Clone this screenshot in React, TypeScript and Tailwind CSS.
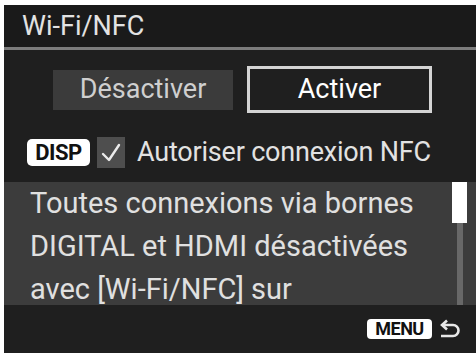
const font = { fontFamily: 'Roboto, "DejaVu Sans", sans-serif' } as const;

function CheckIcon() {
  return (
    <svg width="22" height="22" viewBox="0 0 22 22" fill="none">
      <polyline points="3,12 9,18 19,3" stroke="#ececec" strokeWidth="2.4" strokeLinecap="round" strokeLinejoin="round" />
    </svg>
  );
}

function ReturnIcon() {
  return (
    <svg width="24" height="20" viewBox="0 0 24 20" fill="none">
      <path d="M4 6 H15 A5.5 5.5 0 0 1 15 17 H3" stroke="#e8e8e8" strokeWidth="2.6" />
      <polyline points="9,1.5 4,6 9,10.5" stroke="#e8e8e8" strokeWidth="2.6" />
    </svg>
  );
}

export default function App() {
  return (
    <div className="w-[476px] h-[357px] bg-white pl-[4px] pt-[5px] pb-[4px]" style={font}>
      <div className="h-full bg-[#1f1f1f] flex flex-col text-[#e2e2e2]">
        <div className="h-[45px] shrink-0 bg-[#1a1a1a] border-b-[3px] border-[#7c7c7c] px-[18px] flex items-center text-[27px] leading-none">
          Wi-Fi/NFC
        </div>

        <div className="flex items-center pt-[16px] pl-[49px] gap-[14px]">
          <div className="w-[180px] h-[40px] bg-[#3b3b3b] flex items-center justify-center text-[27px] leading-none text-[#cfcfcf]">
            Désactiver
          </div>
          <div className="w-[185px] h-[47px] border-[3px] border-[#d4d4d4] flex items-center justify-center text-[27px] leading-none text-white">
            Activer
          </div>
        </div>

        <div className="flex items-center mt-[24px] h-[31px] pl-[23px]">
          <div className="w-[63px] h-[27px] bg-white rounded-[5px] flex items-center justify-center text-[#111] text-[22px] font-bold leading-none tracking-[-0.5px]">
            DISP
          </div>
          <div className="ml-[7px] w-[28px] h-[31px] bg-[#4e4e4e] flex items-center justify-center">
            <CheckIcon />
          </div>
          <span className="ml-[12px] text-[27px] leading-none tracking-[-0.2px]">Autoriser connexion NFC</span>
        </div>

        <div className="mt-[14px] h-[123px] shrink-0 bg-[#3c3c3c] flex pr-[9px]">
          <div className="flex-1 pl-[26px] text-[29px] leading-[43px] text-[#e0e0e0]">
            <div>Toutes connexions via bornes</div>
            <div>DIGITAL et HDMI désactivées</div>
            <div>avec [Wi-Fi/NFC] sur</div>
          </div>
          <div className="w-[15px] flex flex-col items-center">
            <div className="w-[15px] h-[41px] bg-white" />
            <div className="w-[6px] flex-1 bg-[#686868]" />
          </div>
        </div>

        <div className="flex-1 flex items-center justify-end pr-[14px] gap-[6px]">
          <div className="w-[65px] h-[20px] bg-white rounded-[4px] flex items-center justify-center text-[#111] text-[18px] font-bold leading-none tracking-[-0.5px]">
            MENU
          </div>
          <ReturnIcon />
        </div>
      </div>
    </div>
  );
}
